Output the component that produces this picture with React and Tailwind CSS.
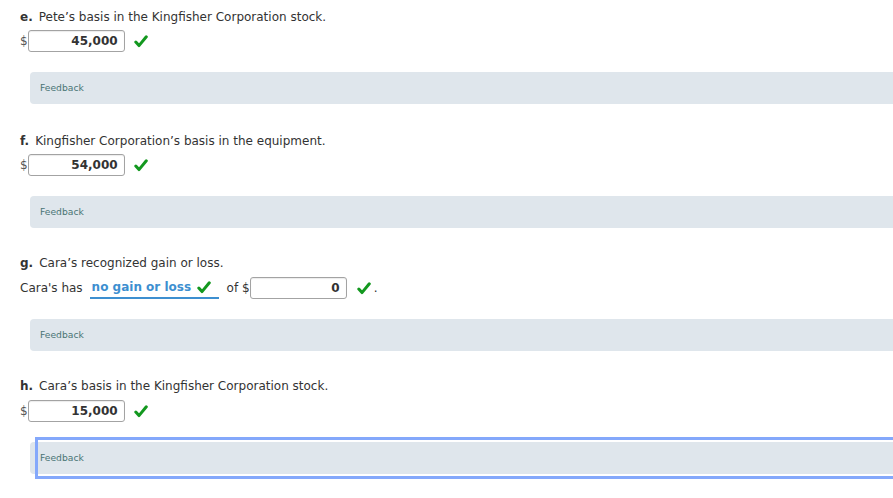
import React from 'react';

const Check = ({ className = '' }) => (
  <svg className={className} width="14" height="13" viewBox="0 0 14 13" fill="none">
    <path d="M1.8 7 L5 10.6 L12.3 1.8" stroke="#13981f" strokeWidth="3" strokeLinecap="round" strokeLinejoin="round" />
  </svg>
);

const Feedback = ({ focused }) => (
  <div className="relative mt-5 ml-[10px] h-8 rounded-l bg-[#dfe6ec]">
    {focused && (
      <div className="absolute -top-[5px] -bottom-[5px] left-[5px] -right-[4px] border-[3px] border-[#84a8fb]" />
    )}
    <span className="relative block pl-[10px] pt-[9px] text-[9.2px] leading-[14px] text-[#4a7575]">Feedback</span>
  </div>
);

const AmountInput = ({ value, className = '' }) => (
  <div className={`flex h-[22px] w-[97px] items-center justify-end rounded-[3px] border border-[#a3a3a3] bg-white pr-[6px] text-[12px] font-bold text-[#333] shadow-[inset_0_1px_1px_rgba(0,0,0,0.08)] ${className}`}>
    {value}
  </div>
);

const Question = ({ letter, title, value, focused, first }) => (
  <section className={first ? '' : 'mt-[27px]'}>
    <div className="h-5 leading-5 text-[12px] text-[#333]">
      <span className="font-bold">{letter}.</span>
      <span className="ml-[6px]">{title}</span>
    </div>
    <div className="mt-[3px] flex items-center text-[12px] text-[#555]">
      <span>$</span>
      <AmountInput value={value} />
      <Check className="ml-[9px]" />
    </div>
    <Feedback focused={focused} />
  </section>
);

export default function App() {
  return (
    <div className="min-h-[498px] overflow-hidden bg-white pt-[7px] pl-[20px] font-['DejaVu_Sans',Verdana,sans-serif]">
      <Question first letter="e" title="Pete’s basis in the Kingfisher Corporation stock." value="45,000" />
      <Question letter="f" title="Kingfisher Corporation’s basis in the equipment." value="54,000" />

      <section className="mt-[25px]">
        <div className="h-5 leading-5 text-[12px] text-[#333]">
          <span className="font-bold">g.</span>
          <span className="ml-[6px]">Cara’s recognized gain or loss.</span>
        </div>
        <div className="mt-[4px] flex items-center text-[12px] text-[#333]">
          <span>Cara's has</span>
          <span className="ml-[7px] flex h-[22px] w-[129px] items-center whitespace-nowrap border-b-2 border-[#3d8fd0] pl-[2px] font-bold text-[#3d8fd0]">
            no gain or loss
            <Check className="ml-[6px]" />
          </span>
          <span className="ml-[8px]">of $</span>
          <AmountInput value="0" />
          <Check className="ml-[10px]" />
          <span className="ml-[3px]">.</span>
        </div>
        <Feedback />
      </section>

      <section className="mt-[25px]">
        <div className="h-5 leading-5 text-[12px] text-[#333]">
          <span className="font-bold">h.</span>
          <span className="ml-[6px]">Cara’s basis in the Kingfisher Corporation stock.</span>
        </div>
        <div className="mt-[4px] flex items-center text-[12px] text-[#555]">
          <span>$</span>
          <AmountInput value="15,000" />
          <Check className="ml-[9px]" />
        </div>
        <Feedback focused />
      </section>
    </div>
  );
}
